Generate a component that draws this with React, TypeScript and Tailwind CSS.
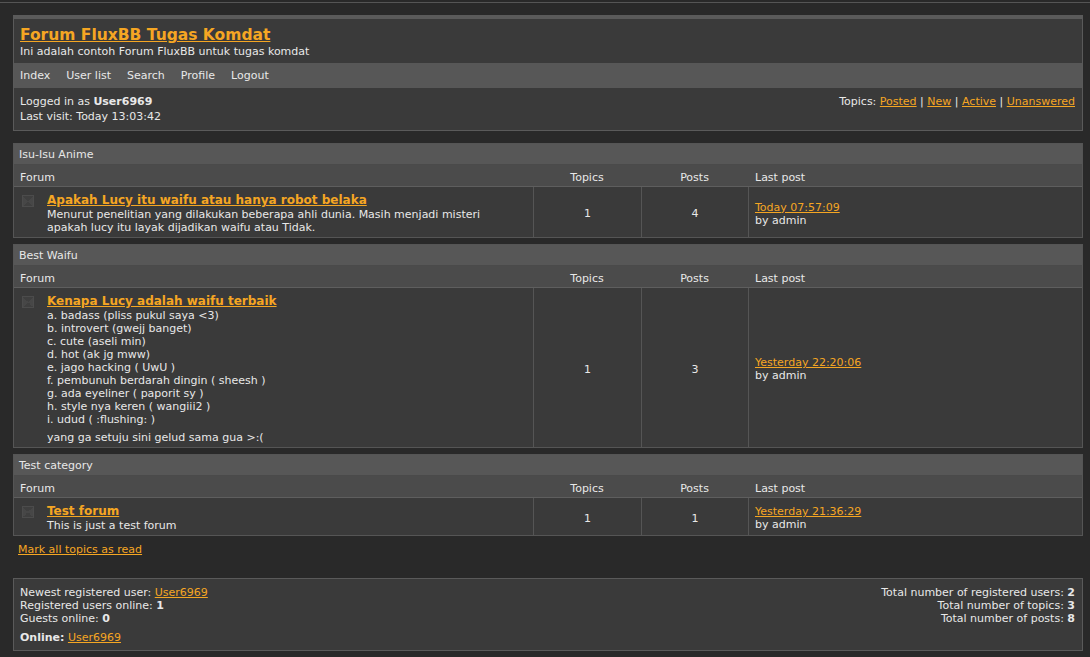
import React from 'react';

const link = 'text-[#f5a623] underline';

function Icon() {
  return (
    <div className="w-[12px] h-[12px] mt-[2px] border border-[#4c4c4c] bg-[conic-gradient(from_45deg,#474747_0_25%,#3f3f3f_25%_50%,#474747_50%_75%,#3f3f3f_75%_100%)]" />
  );
}

function ColHead() {
  return (
    <div className="flex h-[22px] pt-[4px] items-center bg-[#4b4b4b] border-b border-[#5e5e5e]">
      <div className="w-[519px] pl-[6px]">Forum</div>
      <div className="w-[108px] text-center">Topics</div>
      <div className="w-[107px] text-center">Posts</div>
      <div className="flex-1 pl-[7px]">Last post</div>
    </div>
  );
}

interface RowProps {
  title: string;
  desc: React.ReactNode;
  topics: number;
  posts: number;
  last: string;
}

function Row({ title, desc, topics, posts, last }: RowProps) {
  return (
    <div className="flex bg-[#3a3a3a]">
      <div className="w-[519px] flex gap-[13px] pl-[8px] pt-[6px] pb-[3px]">
        <Icon />
        <div>
          <a className={`${link} font-bold text-[12px] leading-[15px]`}>{title}</a>
          <div>{desc}</div>
        </div>
      </div>
      <div className="w-[108px] border-l border-[#555] pt-[3px] flex items-center justify-center">{topics}</div>
      <div className="w-[107px] border-l border-[#555] pt-[3px] flex items-center justify-center">{posts}</div>
      <div className="flex-1 border-l border-[#555] pl-[6px] pt-[3px] flex flex-col justify-center">
        <a className={link}>{last}</a>
        <span>by admin</span>
      </div>
    </div>
  );
}

function Category({ name, children }: { name: string; children: React.ReactNode }) {
  return (
    <div className="border border-[#555] mt-[6px] first:mt-0">
      <div className="h-[21px] flex items-center pl-[5px] bg-[#575757] border-b border-[#4a4a4a]">{name}</div>
      <ColHead />
      {children}
    </div>
  );
}

export default function App() {
  return (
    <div className="min-h-[657px] bg-[#292929] text-[#e8e8e8] text-[11px] leading-[13px] font-['DejaVu_Sans',Verdana,sans-serif] pt-[2px] pb-[12px]">
      <div className="h-px bg-[#555]" />
      <div className="mx-[13px] mt-[12px] w-[1070px]">
        {/* header */}
        <div className="border border-[#5a5a5a] border-t-[4px] bg-[#3a3a3a]">
          <div className="px-[6px] pt-[7px] pb-[5px]">
            <a className={`${link} font-bold text-[15.5px] leading-[19px]`}>Forum FluxBB Tugas Komdat</a>
            <div>Ini adalah contoh Forum FluxBB untuk tugas komdat</div>
          </div>
          <div className="h-[25px] bg-[#575757] flex items-center gap-[16px] px-[6px]">
            <span>Index</span>
            <span>User list</span>
            <span>Search</span>
            <span>Profile</span>
            <span>Logout</span>
          </div>
          <div className="flex justify-between px-[6px] pt-[7px] pb-[7px]">
            <div>
              <div>
                Logged in as <b>User6969</b>
              </div>
              <div className="mt-[2px]">Last visit: Today 13:03:42</div>
            </div>
            <div className="pr-px">
              Topics: <a className={link}>Posted</a> | <a className={link}>New</a> |{' '}
              <a className={link}>Active</a> | <a className={link}>Unanswered</a>
            </div>
          </div>
        </div>

        <div className="mt-[12px]">
          <Category name="Isu-Isu Anime">
            <Row
              title="Apakah Lucy itu waifu atau hanya robot belaka"
              desc={
                <>
                  Menurut penelitian yang dilakukan beberapa ahli dunia. Masih menjadi misteri
                  <br />
                  apakah lucy itu layak dijadikan waifu atau Tidak.
                </>
              }
              topics={1}
              posts={4}
              last="Today 07:57:09"
            />
          </Category>
          <Category name="Best Waifu">
            <Row
              title="Kenapa Lucy adalah waifu terbaik"
              desc={
                <>
                  <div>a. badass (pliss pukul saya &lt;3)</div>
                  <div>b. introvert (gwejj banget)</div>
                  <div>c. cute (aseli min)</div>
                  <div>d. hot (ak jg mww)</div>
                  <div>e. jago hacking ( UwU )</div>
                  <div>f. pembunuh berdarah dingin ( sheesh )</div>
                  <div>g. ada eyeliner ( paporit sy )</div>
                  <div>h. style nya keren ( wangiii2 )</div>
                  <div>i. udud ( :flushing: )</div>
                  <div className="mt-[5px]">yang ga setuju sini gelud sama gua &gt;:(</div>
                </>
              }
              topics={1}
              posts={3}
              last="Yesterday 22:20:06"
            />
          </Category>
          <Category name="Test category">
            <Row
              title="Test forum"
              desc="This is just a test forum"
              topics={1}
              posts={1}
              last="Yesterday 21:36:29"
            />
          </Category>
        </div>

        <div className="pl-[5px] mt-[7px]">
          <a className={link}>Mark all topics as read</a>
        </div>

        {/* footer stats */}
        <div className="mt-[22px] border border-[#5a5a5a] bg-[#3a3a3a] flex justify-between px-[6px] pt-[7px] pb-[6px]">
          <div>
            <div>
              Newest registered user: <a className={link}>User6969</a>
            </div>
            <div>
              Registered users online: <b>1</b>
            </div>
            <div>
              Guests online: <b>0</b>
            </div>
            <div className="mt-[6px]">
              <b>Online:</b> <a className={link}>User6969</a>
            </div>
          </div>
          <div className="text-right pr-px">
            <div>
              Total number of registered users: <b>2</b>
            </div>
            <div>
              Total number of topics: <b>3</b>
            </div>
            <div>
              Total number of posts: <b>8</b>
            </div>
          </div>
        </div>
      </div>
    </div>
  );
}
